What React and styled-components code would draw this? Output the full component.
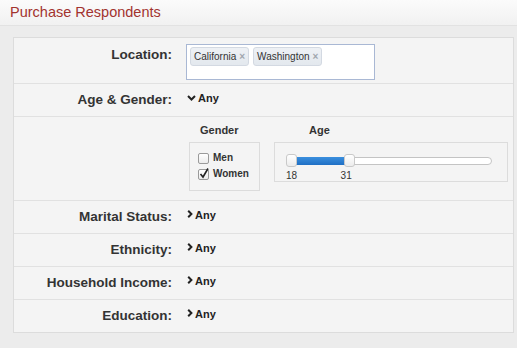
import React from 'react';
import styled, { createGlobalStyle } from 'styled-components';

const GlobalStyle = createGlobalStyle`
  html, body {
    margin: 0;
    padding: 0;
    background: #ececec;
    font-family: "Liberation Sans", Arial, Helvetica, sans-serif;
    color: #333;
  }
`;

const Page = styled.div`
  width: 517px;
  height: 348px;
  overflow: hidden;
  background: #ececec;
`;

const Header = styled.div`
  height: 25px;
  padding-left: 10px;
  background: linear-gradient(#fbfbfb, #f1f1f1);
  border-bottom: 1px solid #e2e2e2;
  display: flex;
  align-items: center;
`;

const Title = styled.h1`
  margin: 0;
  margin-top: -2px;
  font-size: 14.5px;
  font-weight: normal;
  color: #a2332f;
`;

const Panel = styled.div`
  margin: 11px 3px 0 13px;
  background: #f4f4f4;
  border: 1px solid #dcdcdc;
`;

const Row = styled.div`
  display: grid;
  grid-template-columns: 158px 1fr;
  column-gap: 14px;
  align-items: start;
  padding: ${({ pad }) => pad || '8px 0 0'};
  min-height: ${({ h }) => h}px;
  box-sizing: border-box;
  border-top: ${({ first }) => (first ? 'none' : '1px solid #e1e1e1')};
`;

const Label = styled.div`
  text-align: right;
  font-size: 13.5px;
  font-weight: bold;
  line-height: 16px;
  padding-top: ${({ top }) => top || 0}px;
  color: #333;
`;

const TagBox = styled.div`
  width: 181px;
  height: 30px;
  background: #fff;
  border: 1px solid #a9b8d4;
  display: flex;
  align-items: flex-start;
  gap: 4px;
  padding: 2px 3px;
  box-sizing: content-box;
`;

const Tag = styled.span`
  display: inline-flex;
  align-items: center;
  height: 17px;
  padding: 0 3px;
  border: 1px solid #d3d9e2;
  border-radius: 3px;
  background: linear-gradient(#eef1f5, #e3e8ee);
  font-size: 10px;
  color: #333;
  gap: 3px;
`;

const TagClose = styled.span`
  color: #a0a6ae;
  font-size: 10px;
  font-weight: bold;
`;

const Toggle = styled.div`
  display: flex;
  align-items: flex-start;
  gap: 2px;
  font-size: 11px;
  font-weight: bold;
  line-height: 13px;
  color: #222;
  margin-left: 1px;
`;

const Chevron = styled.svg`
  margin-top: ${({ down }) => (down ? 3 : 1)}px;
  flex: none;
`;

const Expanded = styled.div`
  display: flex;
  gap: 14px;
  margin-left: 3px;
`;

const Column = styled.div`
  display: flex;
  flex-direction: column;
  gap: 5px;
`;

const Heading = styled.div`
  font-size: 11px;
  font-weight: bold;
  line-height: 13px;
  padding-left: ${({ indent }) => indent}px;
  color: #333;
`;

const Box = styled.div`
  border: 1px solid #dcdcdc;
  box-sizing: border-box;
  width: ${({ w }) => w}px;
  height: ${({ h }) => h}px;
  padding: ${({ pad }) => pad};
`;

const Check = styled.label`
  display: flex;
  align-items: center;
  gap: 4px;
  font-size: 10px;
  font-weight: bold;
  line-height: 16px;
  color: #333;
`;

const CheckSquare = styled.span`
  width: 9px;
  height: 9px;
  border: 1px solid #9a9a9a;
  border-radius: 2px;
  background: linear-gradient(#fff, #ececec);
  position: relative;
`;

const Tick = styled.svg`
  position: absolute;
  left: 0;
  top: -3px;
`;

const Slider = styled.div`
  position: relative;
  width: 206px;
  height: 8px;
  margin-top: 14px;
`;

const Track = styled.div`
  height: 8px;
  box-sizing: border-box;
  border: 1px solid #c4c4c4;
  border-radius: 4px;
  background: #fff;
`;

const Fill = styled.div`
  position: absolute;
  top: 0;
  height: 8px;
  background: linear-gradient(#3b8fde, #1f6fc4);
`;

const Handle = styled.div`
  position: absolute;
  top: -3px;
  width: 11px;
  height: 13px;
  box-sizing: border-box;
  border: 1px solid #c9c9c9;
  border-radius: 3px;
  background: linear-gradient(#ffffff, #ececec);
`;

const Ticks = styled.div`
  position: relative;
  height: 12px;
  margin-top: 5px;
  font-size: 10px;
  line-height: 12px;
  color: #333;
`;

const TickLabel = styled.span`
  position: absolute;
  top: 0;
`;

const ChevronDown = () => (
  <Chevron down width="9" height="6" viewBox="0 0 9 6">
    <path d="M1 1 L4.5 4.5 L8 1" fill="none" stroke="#222" strokeWidth="2" />
  </Chevron>
);

const ChevronRight = () => (
  <Chevron width="6" height="8" viewBox="0 0 6 8">
    <path d="M1.2 0.8 L4.4 4 L1.2 7.2" fill="none" stroke="#222" strokeWidth="2" />
  </Chevron>
);

const Any = ({ open }) => (
  <Toggle>
    {open ? <ChevronDown /> : <ChevronRight />}
    <span>Any</span>
  </Toggle>
);

const min = 18;
const max = 62;
const low = 18;
const high = 31;
const usable = 206 - 11;

const AgeSlider = () => {
  const a = ((low - min) / (max - min)) * usable;
  const b = ((high - min) / (max - min)) * usable;
  return (
    <>
      <Slider>
        <Track />
        <Fill style={{ left: a + 10, width: b - a - 9 }} />
        <Handle style={{ left: a }} />
        <Handle style={{ left: b }} />
      </Slider>
      <Ticks>
        <TickLabel style={{ left: a }}>{low}</TickLabel>
        <TickLabel style={{ left: b - 3 }}>{high}</TickLabel>
      </Ticks>
    </>
  );
};

const simple = ['Marital Status:', 'Ethnicity:', 'Household Income:', 'Education:'];

export default function App() {
  return (
    <Page>
      <GlobalStyle />
      <Header>
        <Title>Purchase Respondents</Title>
      </Header>
      <Panel>
        <Row first h={45} pad="6px 0 0">
          <Label top={3}>Location:</Label>
          <TagBox>
            <Tag>
              California <TagClose>×</TagClose>
            </Tag>
            <Tag>
              Washington <TagClose>×</TagClose>
            </Tag>
          </TagBox>
        </Row>
        <Row h={33}>
          <Label>Age &amp; Gender:</Label>
          <Any open />
        </Row>
        <Row h={84} pad="7px 0 0">
          <div />
          <Expanded>
            <Column>
              <Heading indent={11}>Gender</Heading>
              <Box w={71} h={49} pad="7px 0 0 8px">
                <Check>
                  <CheckSquare />
                  Men
                </Check>
                <Check>
                  <CheckSquare>
                    <Tick width="11" height="12" viewBox="0 0 11 12">
                      <path d="M1.5 7 L4 10 L9 1.5" fill="none" stroke="#222" strokeWidth="1.6" />
                    </Tick>
                  </CheckSquare>
                  Women
                </Check>
              </Box>
            </Column>
            <Column>
              <Heading indent={35}>Age</Heading>
              <Box w={234} h={40} pad="0 0 0 11px">
                <AgeSlider />
              </Box>
            </Column>
          </Expanded>
        </Row>
        {simple.map((label) => (
          <Row key={label} h={33}>
            <Label>{label}</Label>
            <Any />
          </Row>
        ))}
      </Panel>
    </Page>
  );
}
